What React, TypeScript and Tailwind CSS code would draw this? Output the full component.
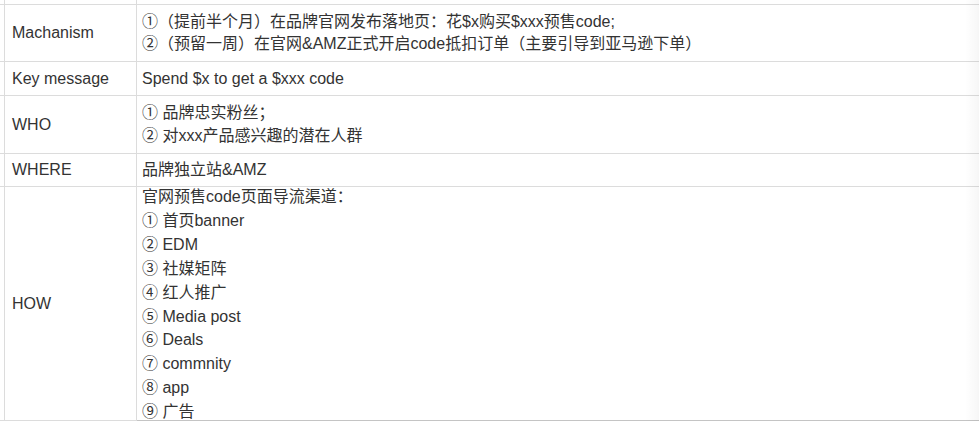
import React from "react";

function Line({ s, h }: { s: string; h: string }) {
  return (
    <div className={`${h} flex items-center whitespace-pre`}>
      <span className="leading-none">{s}</span>
    </div>
  );
}

function Row({
  h,
  label,
  children,
  top = false,
  last = false,
}: {
  h: string;
  label: string;
  children: React.ReactNode;
  top?: boolean;
  last?: boolean;
}) {
  const b = last ? "border-b border-[#c4c4c4]" : "border-b border-[#dcdcdc]";
  return (
    <div className={`flex ${h}`}>
      <div className={`w-[5px] shrink-0 border-r border-[#dcdcdc] ${b}`} />
      <div className={`w-[132px] shrink-0 border-r border-[#dcdcdc] ${b} flex items-center pl-[7px] text-[#333]`}>
        <span className="leading-none">{label}</span>
      </div>
      <div
        className={`flex-1 ${b} pl-[5px] text-[#333] overflow-hidden flex flex-col ${
          top ? "justify-start" : "justify-center"
        }`}
      >
        {children}
      </div>
    </div>
  );
}

const howLines = [
  "官网预售code页面导流渠道：",
  "① 首页banner",
  "② EDM",
  "③ 社媒矩阵",
  "④ 红人推广",
  "⑤ Media post",
  "⑥ Deals",
  "⑦ commnity",
  "⑧ app",
  "⑨ 广告",
];

export default function App() {
  return (
    <div className="relative w-[979px] h-[425px] bg-white overflow-hidden text-[16px] [text-spacing-trim:space-all] font-['Liberation_Sans','Noto_Sans_CJK_SC',sans-serif]">
      <div className="flex flex-col w-[979px]">
        <div className="flex h-[5px]">
          <div className="w-[5px] shrink-0 border-r border-b border-[#dcdcdc]" />
          <div className="w-[132px] shrink-0 border-r border-b border-[#dcdcdc]" />
          <div className="flex-1 border-b border-[#dcdcdc]" />
        </div>
        <Row h="h-[57px]" label="Machanism">
          <Line h="h-[21.5px]" s="①（提前半个月）在品牌官网发布落地页：花$x购买$xxx预售code;" />
          <Line h="h-[21.5px]" s="②（预留一周）在官网&AMZ正式开启code抵扣订单（主要引导到亚马逊下单）" />
        </Row>
        <Row h="h-[34px]" label="Key message">
          <Line h="h-[22px]" s="Spend $x to get a $xxx code" />
        </Row>
        <Row h="h-[58px]" label="WHO">
          <Line h="h-[23px]" s="① 品牌忠实粉丝；" />
          <Line h="h-[23px]" s="② 对xxx产品感兴趣的潜在人群" />
        </Row>
        <Row h="h-[33px]" label="WHERE">
          <Line h="h-[22px]" s="品牌独立站&AMZ" />
        </Row>
        <Row h="h-[234px]" label="HOW" top last>
          <div className="-mt-[1.5px] shrink-0">
            {howLines.map((l, i) => (
              <Line key={i} h="h-[23.85px]" s={l} />
            ))}
          </div>
        </Row>
      </div>
      <div className="absolute top-0 right-0 w-[14px] h-[421px] bg-gradient-to-r from-[rgba(0,0,0,0)] to-[rgba(0,0,0,0.035)]" />
    </div>
  );
}
